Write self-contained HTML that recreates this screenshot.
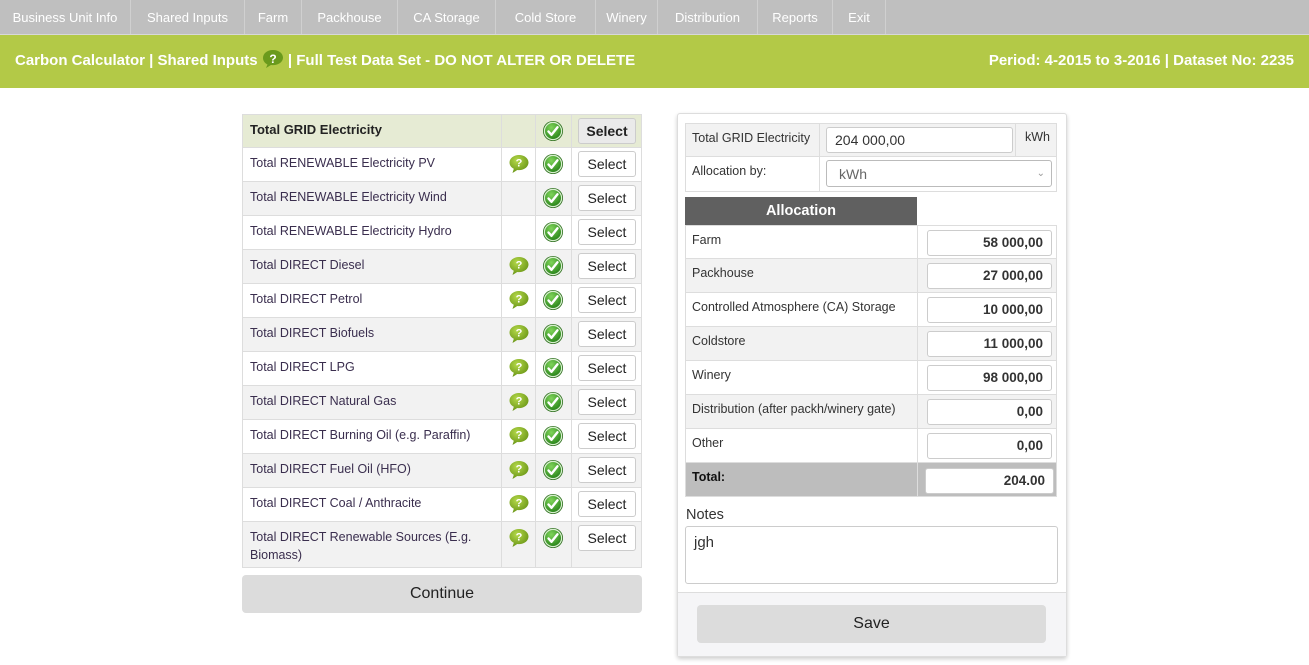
<!DOCTYPE html>
<html><head><meta charset="utf-8"><style>
*{box-sizing:border-box;margin:0;padding:0}
body{width:1309px;height:665px;background:#fff;font-family:"Liberation Sans",sans-serif;position:relative;overflow:hidden;color:#333}
.nav{position:absolute;left:0;top:0;width:1309px;height:35px;background:#bfbfbf;border-bottom:1px solid #d8d8d8}
.nav span{position:absolute;top:0;height:34px;line-height:35px;font-size:13px;color:#fff;border-right:1px solid #d0d0d0;text-align:center}
.bar{position:absolute;left:0;top:35px;width:1309px;height:53px;background:#b3c947;color:#fff;font-weight:bold;font-size:15px;line-height:52px}
.abs{position:absolute}
.row{position:absolute;left:242px;width:400px;border-bottom:1px solid #ddd;border-left:1px solid #ddd;border-right:1px solid #ddd}
.row .lab{position:absolute;left:7px;top:6px;font-size:12.5px;color:#3a2e4e;line-height:18px;width:245px}
.row .c1,.row .c2,.row .c3{position:absolute;top:0;bottom:0;border-left:1px solid #ddd}
.row .c1{left:258px;width:34px}.row .c2{left:292px;width:36px}.row .c3{left:328px;width:71px}
.btn{position:absolute;left:6px;top:3px;width:58px;height:26px;border:1px solid #ccc;border-radius:3px;background:#fff;font-size:14px;text-align:center;line-height:24px;color:#222}
.ic{position:absolute;left:7px;top:5px}
.rrow{position:absolute;left:685px;width:372px;border:1px solid #ddd;border-top:none}
.rrow .l{position:absolute;left:6px;top:7px;font-size:12.5px;color:#333}
.rrow .sep{position:absolute;left:231px;top:0;bottom:0;border-left:1px solid #ddd}
.inp{position:absolute;left:241px;top:4px;width:125px;height:26px;border:1px solid #ccc;border-radius:3px;background:#fff;text-align:right;padding-right:8px;font-weight:bold;font-size:13.5px;line-height:24px;color:#333}
</style></head><body>
<div class="nav">
<span style="left:0;width:131px">Business Unit Info</span>
<span style="left:131px;width:114px">Shared Inputs</span>
<span style="left:245px;width:57px">Farm</span>
<span style="left:302px;width:96px">Packhouse</span>
<span style="left:398px;width:98px">CA Storage</span>
<span style="left:496px;width:100px">Cold Store</span>
<span style="left:596px;width:62px">Winery</span>
<span style="left:658px;width:100px">Distribution</span>
<span style="left:758px;width:75px">Reports</span>
<span style="left:833px;width:53px">Exit</span>
</div>
<div class="bar"><span class="abs" style="left:15px">Carbon Calculator | Shared Inputs <svg width="22" height="20" viewBox="0 0 22 20" style="vertical-align:-4px"><path d="M11 1C5 1 1 4.5 1 9c0 3 2 5.3 4.5 6.5L4 19l5-3c.6.1 1.3.1 2 .1 6 0 10-3.5 10-7.5S17 1 11 1z" fill="#6a9a1c"/><text x="11" y="14" font-size="12" font-weight="bold" fill="#fff" text-anchor="middle" font-family="Liberation Sans">?</text></svg> | Full Test Data Set - DO NOT ALTER OR DELETE</span><span class="abs" style="right:15px">Period: 4-2015 to 3-2016 | Dataset No: 2235</span></div>

<div id="left"></div>
<div class="abs" style="left:242px;top:575px;width:400px;height:38px;background:#dcdcdc;border-radius:4px;text-align:center;line-height:37px;font-size:16px;color:#222">Continue</div>

<div class="abs" style="left:677px;top:113px;width:390px;height:544px;border:1px solid #ddd;border-radius:3px;box-shadow:0 2px 4px rgba(0,0,0,.2);background:#fff"></div>
<div class="abs" style="left:678px;top:592px;width:388px;height:64px;background:#f5f5f7;border-top:1px solid #ddd"></div>
<div class="abs" style="left:697px;top:605px;width:349px;height:38px;background:#dcdcdc;border-radius:4px;text-align:center;line-height:37px;font-size:16px;color:#222">Save</div>

<div class="rrow" style="top:123px;height:34px;background:#f2f2f2;border-top:1px solid #ddd"><div class="l">Total GRID Electricity</div><div class="sep" style="left:133px"></div><div class="sep" style="left:329px"></div>
<div class="abs" style="left:140px;top:3px;width:187px;height:26px;border:1px solid #ccc;border-radius:3px;background:#fff;font-size:14px;padding-left:8px;line-height:25px">204 000,00</div>
<div class="abs" style="left:339px;top:6px;font-size:12.5px">kWh</div></div>
<div class="rrow" style="top:157px;height:35px;background:#fff"><div class="l">Allocation by:</div><div class="sep" style="left:133px"></div>
<div class="abs" style="left:140px;top:3px;width:226px;height:27px;border:1px solid #bbb;border-radius:3px;background:#fff;font-size:14px;padding-left:12px;line-height:27px;color:#666">kWh<span class="abs" style="right:6px;top:-1px;font-size:10px;color:#999">&#8964;</span></div></div>
<div class="abs" style="left:685px;top:197px;width:232px;height:28px;background:#606060;color:#fff;font-weight:bold;font-size:14.5px;text-align:center;line-height:29px">Allocation</div>
<div id="right"></div>
<div class="abs" style="left:686px;top:507px;font-size:14.5px;color:#333">Notes</div>
<div class="abs" style="left:685px;top:526px;width:373px;height:58px;border:1px solid #ccc;border-radius:3px;padding:7px 8px;font-size:15px;color:#333">jgh</div>

<script>
(function(){
var L=["Total GRID Electricity","Total RENEWABLE Electricity PV","Total RENEWABLE Electricity Wind","Total RENEWABLE Electricity Hydro","Total DIRECT Diesel","Total DIRECT Petrol","Total DIRECT Biofuels","Total DIRECT LPG","Total DIRECT Natural Gas","Total DIRECT Burning Oil (e.g. Paraffin)","Total DIRECT Fuel Oil (HFO)","Total DIRECT Coal / Anthracite","Total DIRECT Renewable Sources (E.g. Biomass)"];
var help='<svg class="ic" width="22" height="20" viewBox="0 0 22 20" style="left:6px;top:6px"><defs><radialGradient id="hg" cx=".4" cy=".3" r=".8"><stop offset="0" stop-color="#b5d94a"/><stop offset="1" stop-color="#5f8c10"/></radialGradient></defs><path d="M11 1C5.5 1 1.5 4.5 1.5 8.5c0 2.8 1.8 5 4.3 6.2L4.5 19l4.8-3c.6.1 1.1.1 1.7.1 5.5 0 9.5-3.5 9.5-7.6S16.5 1 11 1z" fill="url(#hg)"/><text x="11" y="12.5" font-size="11" font-weight="bold" fill="#fff" text-anchor="middle" font-family="Liberation Sans">?</text></svg>';
var chk='<svg class="ic" width="22" height="22" viewBox="0 0 22 22" style="left:6px;top:5px"><defs><radialGradient id="cg" cx=".4" cy=".3" r=".8"><stop offset="0" stop-color="#7fd45a"/><stop offset="1" stop-color="#1e7a12"/></radialGradient></defs><circle cx="11" cy="11" r="10" fill="#2c6e1c"/><circle cx="11" cy="11" r="8.6" fill="url(#cg)" stroke="#d8efcf" stroke-width="1.2"/><path d="M6.5 11.5l3 3.3 6-7.5" fill="none" stroke="#fff" stroke-width="2.4" stroke-linecap="round" stroke-linejoin="round"/></svg>';
var h='';
for(var i=0;i<13;i++){var ty=114+34*i,ht=i==12?46:34;var bg=i==0?'#e6ebd4':(i%2==1?'#fff':'#f2f2f2');
h+='<div class="row" style="top:'+ty+'px;height:'+ht+'px;background:'+bg+(i==0?';border-top:1px solid #ddd':'')+'"><div class="lab" style="'+(i==0?'font-weight:bold;color:#222;font-size:13px':'')+'">'+L[i]+'</div><div class="c1">'+(i>0&&i!=2&&i!=3?help:'')+'</div><div class="c2">'+chk+'</div><div class="c3"><div class="btn" style="'+(i==0?'background:#eaeaea;font-weight:bold':'')+'">Select</div></div></div>';}
document.getElementById('left').innerHTML=h;
var R=[["Farm","58 000,00"],["Packhouse","27 000,00"],["Controlled Atmosphere (CA) Storage","10 000,00"],["Coldstore","11 000,00"],["Winery","98 000,00"],["Distribution (after packh/winery gate)","0,00"],["Other","0,00"]];
h='';
for(var j=0;j<8;j++){var t=225+34*j;var tot=j==7;var bg=tot?'#bdbdbd':(j%2==0?'#fff':'#f2f2f2');
h+='<div class="rrow" style="top:'+t+'px;height:34px;background:'+bg+(j==0?';border-top:1px solid #ddd':'')+'"><div class="l" style="'+(tot?'font-weight:bold;color:#111':'')+'">'+(tot?'Total:':R[j][0])+'</div><div class="sep"></div><div class="inp" style="'+(tot?'left:239px;width:129px;top:5px':'')+'">'+(tot?'204.00':R[j][1])+'</div></div>';}
document.getElementById('right').innerHTML=h;
})();
</script>
</body></html>
